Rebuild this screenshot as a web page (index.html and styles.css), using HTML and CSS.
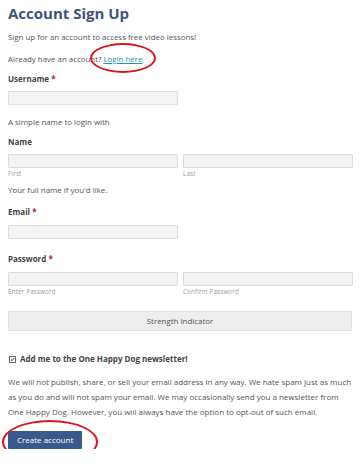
FILE: index.html
```html
<!DOCTYPE html>
<html lang="en">
<head>
  <title>Account Sign Up</title>
  <meta charset="utf-8">
  <meta name="viewport" content="width=device-width, initial-scale=1">
  <link rel="stylesheet" href="styles.css">
</head>
<body>
  <main class="signup">
    <h1 class="signup-title">Account Sign Up</h1>
    <p class="signup-intro">Sign up for an account to access free video lessons!</p>
    <p class="signup-login">Already have an account? <a href="#" class="signup-link">Login here</a></p>

    <form class="form">
      <div class="field">
        <label class="field-label">Username <span class="req">*</span></label>
        <input class="input input-half" type="text">
        <p class="field-help">A simple name to login with</p>
      </div>

      <div class="field">
        <label class="field-label">Name</label>
        <div class="field-row">
          <div class="field-col">
            <input class="input" type="text">
            <span class="sublabel">First</span>
          </div>
          <div class="field-col">
            <input class="input" type="text">
            <span class="sublabel">Last</span>
          </div>
        </div>
        <p class="field-help field-help-tight">Your full name if you'd like.</p>
      </div>

      <div class="field field-email">
        <label class="field-label">Email <span class="req">*</span></label>
        <input class="input input-half" type="text">
      </div>

      <div class="field field-password">
        <label class="field-label">Password <span class="req">*</span></label>
        <div class="field-row">
          <div class="field-col">
            <input class="input" type="password">
            <span class="sublabel">Enter Password</span>
          </div>
          <div class="field-col">
            <input class="input" type="password">
            <span class="sublabel">Confirm Password</span>
          </div>
        </div>
      </div>

      <div class="strength">Strength Indicator</div>

      <label class="newsletter">
        <span class="newsletter-box">
          <svg viewBox="0 0 7 7" aria-hidden="true"><path d="M1.3 3.6 2.9 5.1 5.8 1.6"/></svg>
        </span>
        Add me to the One Happy Dog newsletter!
      </label>

      <p class="disclaimer">We will not publish, share, or sell your email address in any way. We hate spam just as much as you do and will not spam your email. We may occasionally send you a newsletter from One Happy Dog. However, you will always have the option to opt-out of such email.</p>

      <button class="button" type="button">Create account</button>
    </form>

    <span class="mark mark-login"></span>
    <span class="mark mark-button"></span>
  </main>
</body>
</html>
```

FILE: styles.css
```css
*, *::before, *::after {
  margin: 0;
  padding: 0;
  box-sizing: border-box;
}

body {
  margin: 0;
  padding: 0 8px;
  background-color: #FFFFFF;
  color: #555555;
  font-family: "Open Sans", sans-serif;
  font-size: 7.9px;
}

.signup {
  position: relative;
  width: 345px;
}

.signup-title {
  padding-top: 3px;
  color: #3B5578;
  font-size: 15px;
  font-weight: 700;
  line-height: 20px;
}

.signup-intro {
  margin-top: 8px;
  line-height: 12px;
}

.signup-login {
  margin-top: 10px;
  line-height: 12px;
}

.signup-link {
  color: #2A8FA8;
}

.form {
  display: flex;
  flex-direction: column;
}

.field {
  margin-top: 8px;
}

.field-label {
  display: block;
  color: #444444;
  font-size: 8px;
  font-weight: 700;
  line-height: 12px;
}

.req {
  color: #A3282B;
}

.input {
  display: block;
  width: 100%;
  height: 14px;
  margin-top: 6px;
  border: 1px solid #DDDDDD;
  border-radius: 1px;
  background-color: #F3F3F3;
}

.input-half {
  width: 170px;
}

.field-help {
  margin-top: 11px;
  line-height: 12px;
}

.field-help-tight {
  margin-top: 4px;
}

.field-row {
  display: flex;
  gap: 5px;
}

.field-col {
  flex: 1;
}

.sublabel {
  display: block;
  color: #999999;
  font-size: 6.2px;
  letter-spacing: 0.2px;
  line-height: 12px;
}

.field-email {
  margin-top: 10px;
}

.field-email .input {
  margin-top: 7px;
}

.field-password {
  margin-top: 14px;
}

.field-password .input {
  margin-top: 7px;
}

.strength {
  margin-top: 13px;
  width: 344px;
  height: 20px;
  border: 1px solid #E3E3E3;
  background-color: #EEEEEE;
  line-height: 18px;
  text-align: center;
}

.newsletter {
  display: flex;
  align-items: center;
  gap: 4px;
  margin-top: 22px;
  padding-left: 1px;
  color: #444444;
  font-size: 8px;
  font-weight: 700;
  line-height: 12px;
}

.newsletter-box {
  display: block;
  width: 7px;
  height: 7px;
  border: 1px solid #666666;
  background-color: #FFFFFF;
}

.newsletter-box svg {
  display: block;
  width: 5px;
  height: 5px;
  fill: none;
  stroke: #222222;
  stroke-width: 1.4;
}

.disclaimer {
  margin-top: 9px;
  font-size: 8px;
  line-height: 15px;
}

.button {
  align-self: flex-start;
  margin-top: 12px;
  padding: 0 9px;
  height: 18px;
  border: none;
  border-radius: 1px;
  background-color: #3B5A8C;
  color: #FFFFFF;
  font-family: inherit;
  font-size: 8px;
  line-height: 18px;
}

.mark {
  position: absolute;
  border: 2px solid #D9161E;
  border-radius: 50%;
}

.mark-login {
  top: 43px;
  left: 82px;
  width: 66px;
  height: 30px;
}

.mark-button {
  top: 420px;
  left: -6px;
  width: 96px;
  height: 44px;
}
```
